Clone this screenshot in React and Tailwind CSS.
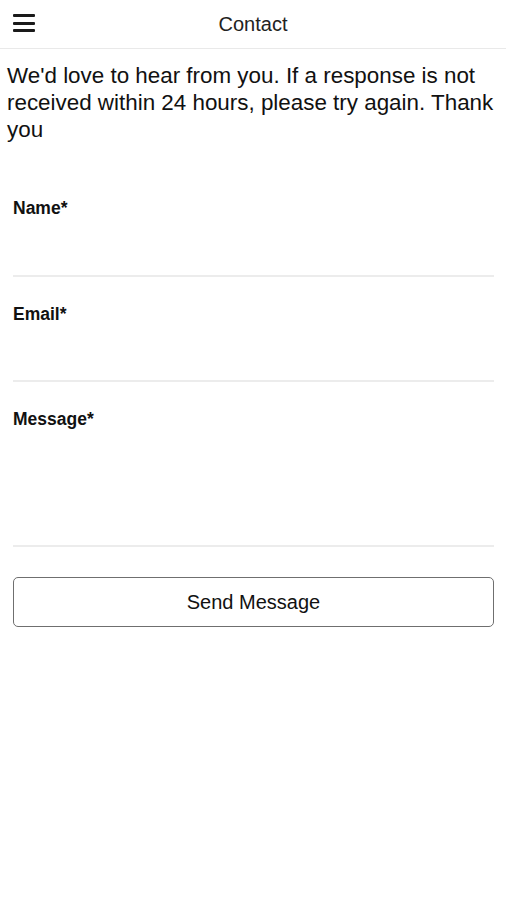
export default function App() {
  const font = { fontFamily: '"Liberation Sans", Arial, sans-serif' };
  const Field = ({ label, area }) => (
    <div className="pt-[27px]">
      <div className="text-[17.5px] leading-[20px] font-bold text-[#111]">{label}</div>
      <div className={area}></div>
      <div className="h-[2px] bg-[#ececec]"></div>
    </div>
  );
  return (
    <div className="w-[506px] h-[900px] bg-white text-[#111]" style={font}>
      <div className="h-[49px] border-b border-[#e9e9e9] flex items-center relative">
        <div className="ml-[13px] flex flex-col gap-[4.5px] w-[22px] -mt-[2px]">
          <div className="h-[3px] bg-[#1a1a1a] rounded-[1px]"></div>
          <div className="h-[3px] bg-[#1a1a1a] rounded-[1px]"></div>
          <div className="h-[3px] bg-[#1a1a1a] rounded-[1px]"></div>
        </div>
        <div className="absolute inset-x-0 top-0 h-[48px] flex items-center justify-center text-[20px] text-[#222]">
          Contact
        </div>
      </div>
      <p className="px-[7px] mt-[13px] text-[22.4px] leading-[27px]">
        We'd love to hear from you. If a response is not received within 24 hours, please try again. Thank you
      </p>
      <div className="pl-[13px] pr-[12px] mt-[28px]">
        <Field label="Name*" area="h-[57px]" />
        <Field label="Email*" area="h-[56px]" />
        <Field label="Message*" area="h-[116px]" />
        <div className="mt-[30px] h-[50px] border-[1.5px] border-[#6f6f6f] rounded-[5px] flex items-center justify-center text-[20px] text-[#111]">
          Send Message
        </div>
      </div>
    </div>
  );
}
